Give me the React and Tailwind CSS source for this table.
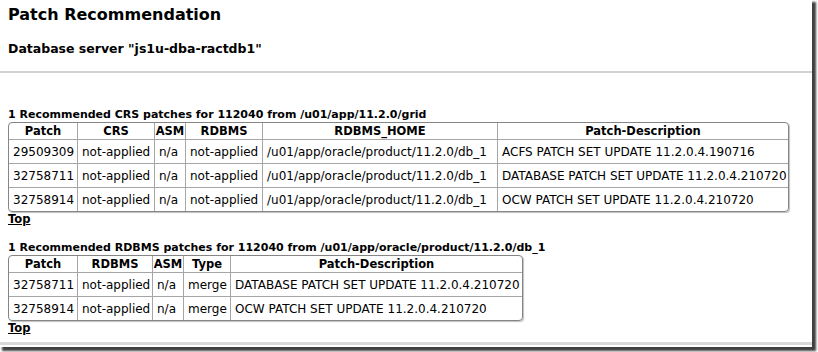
import React from "react";

const crsCols = [68, 77, 31, 77, 235, 291];
const crsHead = ["Patch", "CRS", "ASM", "RDBMS", "RDBMS_HOME", "Patch-Description"];
const crsRows = [
  ["29509309", "not-applied", "n/a", "not-applied", "/u01/app/oracle/product/11.2.0/db_1", "ACFS PATCH SET UPDATE 11.2.0.4.190716"],
  ["32758711", "not-applied", "n/a", "not-applied", "/u01/app/oracle/product/11.2.0/db_1", "DATABASE PATCH SET UPDATE 11.2.0.4.210720"],
  ["32758914", "not-applied", "n/a", "not-applied", "/u01/app/oracle/product/11.2.0/db_1", "OCW PATCH SET UPDATE 11.2.0.4.210720"],
];

const dbCols = [68, 75, 31, 47, 292];
const dbHead = ["Patch", "RDBMS", "ASM", "Type", "Patch-Description"];
const dbRows = [
  ["32758711", "not-applied", "n/a", "merge", "DATABASE PATCH SET UPDATE 11.2.0.4.210720"],
  ["32758914", "not-applied", "n/a", "merge", "OCW PATCH SET UPDATE 11.2.0.4.210720"],
];

function PatchTable({ cols, head, rows }) {
  const total = cols.reduce((a, b) => a + b, 0);
  return (
    <div className="w-fit border border-[#858585] rounded-[4px] overflow-hidden shadow-[1px_1px_1px_rgba(0,0,0,0.25)]">
      <table className="table-fixed border-separate border-spacing-0" style={{ width: total }}>
        <colgroup>
          {cols.map((w, i) => (
            <col key={i} style={{ width: w }} />
          ))}
        </colgroup>
        <thead>
          <tr className="h-[16px]">
            {head.map((h, i) => (
              <th
                key={h}
                className={`p-0 text-center font-bold text-[11.5px] leading-[14px] ${i > 0 ? "border-l border-[#a6a6a6]" : ""}`}
              >
                {h}
              </th>
            ))}
          </tr>
        </thead>
        <tbody>
          {rows.map((r, ri) => (
            <tr key={ri} className="h-[24px]">
              {r.map((c, i) => (
                <td
                  key={i}
                  className={`px-[4px] py-0 text-left whitespace-nowrap overflow-hidden border-t border-[#a6a6a6] ${i > 0 ? "border-l" : ""}`}
                >
                  {c}
                </td>
              ))}
            </tr>
          ))}
        </tbody>
      </table>
    </div>
  );
}

export default function App() {
  return (
    <div className="w-[818px] h-[352px] bg-white overflow-hidden text-black font-['DejaVu_Sans',sans-serif]">
      <div className="w-[812px] h-[347px] bg-white shadow-[3px_3px_2px_1px_rgba(0,0,0,0.75)] flex flex-col">
        <div className="shrink-0 pl-[8px] pt-[5px]">
          <h1 className="text-[16px] leading-[20px] font-bold">Patch Recommendation</h1>
          <h2 className="mt-[16px] text-[12.5px] leading-[16px] font-bold">Database server "js1u-dba-ractdb1"</h2>
        </div>
        <div className="shrink-0 mt-[14px] h-[2px] bg-[#d2d2d2]" />

        <div className="shrink-0 pl-[8px] pt-[35px] text-[12px]">
          <p className="text-[11px] font-bold leading-[14px]">1 Recommended CRS patches for 112040 from /u01/app/11.2.0/grid</p>
          <PatchTable cols={crsCols} head={crsHead} rows={crsRows} />
          <a href="#top" className="block w-fit mt-[1px] font-bold text-[11.5px] underline leading-[13px]">Top</a>

          <p className="mt-[15px] text-[11px] font-bold leading-[14px]">1 Recommended RDBMS patches for 112040 from /u01/app/oracle/product/11.2.0/db_1</p>
          <PatchTable cols={dbCols} head={dbHead} rows={dbRows} />
          <a href="#top" className="block w-fit mt-[1px] font-bold text-[11.5px] underline leading-[13px]">Top</a>
        </div>
        <div className="shrink-0 mt-[7px] h-[3px] bg-[#d9d9d9]" />
      </div>
    </div>
  );
}
